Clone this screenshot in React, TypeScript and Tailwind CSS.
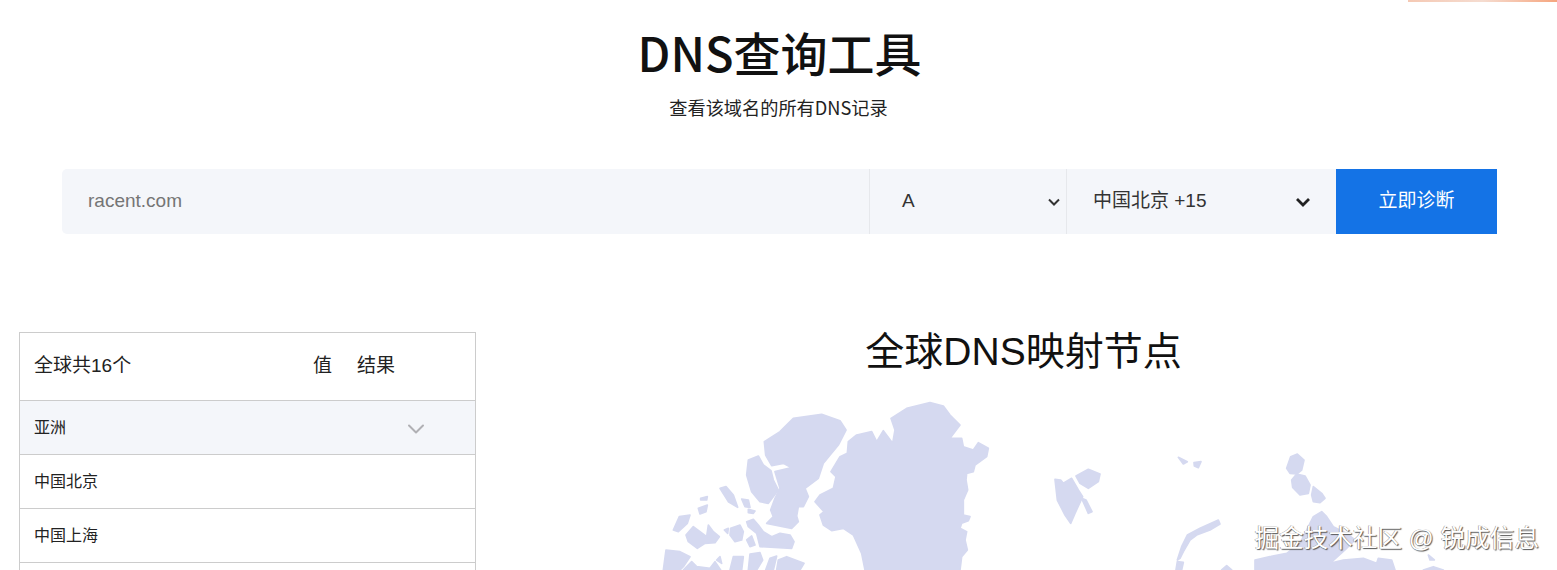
import React from "react";
import { ChevronDown } from "lucide-react";

const cjk = "font-['Liberation_Sans','Noto_Sans_CJK_SC',sans-serif]";
const noto = "font-['Noto_Sans_CJK_SC',sans-serif]";

const shapes: string[] = [
  // Greenland
  "873,55 920,25 990,8 1030,18 1050,45 1080,75 1050,115 1085,115 1090,140 1120,150 1135,128 1165,145 1160,170 1125,195 1120,215 1100,220 1098,240 1103,270 1090,300 1090,345 1110,350 1105,362 1085,370 1080,385 1100,395 1095,420 1102,450 1085,470 1080,510 795,510 785,460 760,405 730,385 695,392 670,375 660,345 672,335 645,305 660,285 700,265 708,230 693,215 720,170 742,160 745,125 770,105 815,95 830,125 850,92 878,130 885,90",
  // Ellesmere
  "493,125 540,95 580,55 665,43 720,62 738,90 715,135 670,190 655,235 615,265 625,290 610,320 595,320 590,348 595,365 575,385 500,370 520,350 512,330 525,295 540,265 525,215 575,203 550,190 515,197 497,165",
  "445,180 475,168 490,195 513,212 520,240 535,270 505,310 480,305 455,275 440,225",
  "360,265 378,260 400,285 413,322 385,305",
  "425,297 445,300 450,322 435,320",
  "445,328 465,333 460,340 445,338",
  "302,295 322,290 320,300 302,300",
  "295,325 322,315 318,335 300,342",
  "238,350 270,345 262,370 235,395 220,390",
  "258,405 280,380 300,395 320,410 325,375 340,395 358,410 345,428 315,430 292,445 265,425",
  "373,390 385,385 383,400",
  "392,385 420,375 430,395 425,420 405,425 390,405",
  "440,365 460,358 475,375 490,395 515,410 540,400 570,405 582,425 575,445 480,440 470,400 445,380",
  "440,420 455,408 465,435 450,440",
  "190,510 198,450 240,455 270,470 250,500 240,510",
  "250,510 275,485 290,500 330,505 345,485 362,510",
  "350,480 360,470 365,490",
  "390,510 400,470 430,470 425,510",
  "445,510 450,462 480,458 488,480 470,510",
  "497,510 510,475 530,468 520,510",
  "530,510 535,480 560,470 580,478 612,490 600,510",
  // Svalbard
  "1365,238 1382,240 1390,250 1415,235 1435,270 1448,290 1425,340 1412,370 1395,345 1372,300",
  "1428,228 1465,208 1500,222 1495,245 1465,265 1440,250",
  "1445,295 1458,300 1476,335 1465,340",
  // Franz Josef and nearby
  "1735,172 1762,185 1750,192",
  "1782,188 1803,185 1795,203 1783,198",
  "2072,170 2092,162 2112,180 2105,210 2090,222 2070,220 2060,205",
  "2090,222 2115,228 2130,255 2125,280 2100,285 2078,262 2075,240",
  "2140,260 2165,280 2175,295 2160,308 2140,305 2135,285",
  // Novaya Zemlya
  "1855,360 1860,372 1830,390 1790,405 1770,420 1750,455 1740,475 1732,480 1745,440 1762,405 1800,385",
  "1728,510 1732,485 1750,487 1745,510",
  "1865,510 1880,497 1895,510",
  // Siberian coast
  "1965,510 1965,480 2010,470 2060,460 2100,430 2140,350 2165,335 2180,350 2200,380 2240,400 2265,420 2235,450 2190,490 2230,480 2290,475 2330,490 2335,475 2375,480 2385,510",
  "2485,465 2503,480 2490,480",
  "2470,510 2500,500 2530,510",
];

function TableRow({ label, shaded, chevron }: { label: string; shaded?: boolean; chevron?: boolean }) {
  return (
    <div className={`flex h-[54px] items-center justify-between border-b border-[#cccccc] pl-[14px] pr-[45px] text-[16px] text-[#222222] ${shaded ? "bg-[#f4f6fa]" : "bg-white"}`}>
      <span>{label}</span>
      {chevron && <ChevronDown size={28} strokeWidth={1.7} className="mt-[3px] text-[#b0b0b4]" />}
    </div>
  );
}

export default function App() {
  return (
    <div className={`relative h-[570px] w-full overflow-hidden bg-white ${cjk}`}>
      <div className="absolute right-0 top-0 h-[1.5px] w-[149px] bg-gradient-to-r from-[#f5c9b4] via-[#f5dcd0] to-[#f5a57e]" />

      <header className={`flex flex-col items-center pt-[18px] ${noto}`}>
        <h1 className="h-[68px] pl-[2px] text-[47px] font-medium leading-[68px] text-[#111111]">DNS查询工具</h1>
        <p className="mt-[8px] h-[26px] text-[18.2px] leading-[26px] text-[#222222]">查看该域名的所有DNS记录</p>
      </header>

      <div className="ml-[62px] mr-[60px] mt-[49px] flex h-[65px] overflow-hidden rounded-l-[5px] bg-[#f4f6fa]">
        <input
          placeholder="racent.com"
          className="min-w-0 flex-1 bg-transparent pl-[26px] text-[19px] outline-none placeholder:text-[#757575]"
        />
        <div className="flex w-[197px] items-center justify-between border-l border-[#e6e8ec] pl-[32px] pr-[5px] text-[19px] text-[#333333]">
          <span>A</span>
          <svg width="14" height="14" viewBox="0 0 14 14" fill="none" stroke="#333333" strokeWidth="2"><path d="M2 4.5 7 9.5 12 4.5" /></svg>
        </div>
        <div className="flex w-[270px] items-center justify-between border-l border-[#e6e8ec] pl-[26px] pr-[25px] text-[19px] text-[#333333]">
          <span>中国北京 +15</span>
          <svg width="16" height="14" viewBox="0 0 16 14" fill="none" stroke="#222222" strokeWidth="2.8"><path d="M2 4 8 10 14 4" /></svg>
        </div>
        <button className="flex w-[161px] items-center justify-center bg-[#1473e6] text-[19px] text-white">立即诊断</button>
      </div>

      <div className="mt-[98px] flex pl-[19px]">
        <div className="w-[457px] shrink-0 border border-b-0 border-[#cccccc]">
          <div className="flex h-[68px] items-center border-b border-[#cccccc] pl-[14px] text-[19px] text-[#222222]">
            <span className="w-[279px]">全球共16个</span>
            <span className="w-[44px]">值</span>
            <span>结果</span>
          </div>
          <TableRow label="亚洲" shaded chevron />
          <TableRow label="中国北京" />
          <TableRow label="中国上海" />
        </div>

        <div className="min-w-0 flex-1 pl-[14px]">
          <h2 className="h-[40px] text-center text-[39px] font-normal leading-[40px] text-[#111111]">全球DNS映射节点</h2>
          <svg width="957" height="170" viewBox="0 0 2871 510" className="ml-[110px] mt-[28px] block">
            {shapes.map((p, i) => (
              <polygon key={i} points={p} fill="#d5d9f0" stroke="#d5d9f0" strokeWidth="5" strokeLinejoin="round" />
            ))}
          </svg>
        </div>
      </div>

      <div className="absolute bottom-[17px] right-[18px] text-[24.6px] leading-[28px] text-white [text-shadow:1px_1px_1px_#555555,-0.5px_-0.5px_0.5px_#888888]">
        掘金技术社区 @ 锐成信息
      </div>
    </div>
  );
}
